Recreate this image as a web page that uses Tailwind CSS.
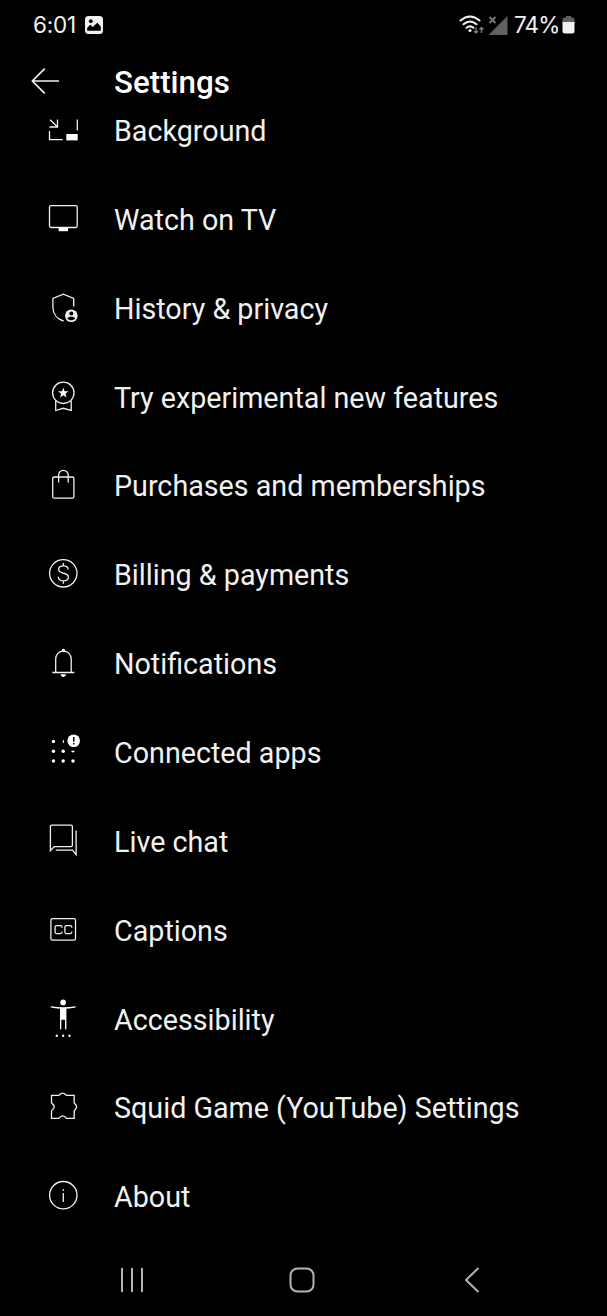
<!DOCTYPE html>
<html lang="en">
<head>
<meta charset="utf-8">
<meta name="viewport" content="width=device-width">
<title>Settings</title>
<script src="https://cdn.jsdelivr.net/npm/@tailwindcss/browser@4"></script>
</head>
<body class="bg-black">
<div class="w-[607px] h-[1316px] bg-black text-[#f1f1f1] font-['Roboto',sans-serif] flex flex-col overflow-hidden">
  <!-- Status bar -->
  <header class="h-[49px] shrink-0 flex items-center justify-between pl-[33px] pr-[32px] text-[23px] leading-none">
    <div class="flex items-center gap-[8px]">
      <span class="w-[44px] whitespace-nowrap font-['Inter',sans-serif] text-[22.5px] tracking-[-0.2px] pt-px">6:01</span>
      <svg class="w-[18px] h-[18px]" viewBox="0 0 18 18"><rect width="18" height="18" rx="3.5" fill="#f1f1f1"/><circle cx="5.8" cy="5.2" r="1.9" fill="#000"/><path d="M2.2 14.8v-3l3-3 2.6 2.3 4.4-4.3 3.6 3.6v4.4z" fill="#000"/></svg>
    </div>
    <div class="flex items-center">
      <svg class="w-[50px] h-[22px]" viewBox="459 13 50 22" fill="none"><g stroke="#f1f1f1" stroke-width="2" stroke-linecap="round"><path d="M460.500 19.500q9.500-8 19 0M463.500 23.300q6.500-5.600 13 0M466.500 26.800q3.500-2.800 7 0"/></g><circle cx="470" cy="29.500" r="1.500" fill="#f1f1f1"/><path d="M476 26.500v5.500m-2-2 2 2 2-2M481.500 32v-5.500m-2 2 2-2 2 2" stroke="#777" stroke-width="1.500"/><path d="M507.500 15v19H488.500z" fill="#606060"/><path d="m489.500 16 6 6m0-6-6 6" stroke="#777" stroke-width="2"/></svg>
      <span class="ml-[5px] w-[45px] whitespace-nowrap font-['Inter',sans-serif] text-[22.5px] tracking-[-0.9px] pt-px">74%</span>
      <svg class="ml-[3px] w-[13px] h-[18px]" viewBox="0 0 13 18"><path d="M4 0h5v1.500h1.500a2 2 0 0 1 2 2V7H.500V3.500a2 2 0 0 1 2-2H4z" fill="#606060"/><path d="M.500 6h12v9a2.500 2.500 0 0 1-2.500 2.500H3A2.500 2.500 0 0 1 .500 15z" fill="#f1f1f1"/></svg>
    </div>
  </header>
  <!-- Toolbar -->
  <div class="h-[66px] shrink-0 flex items-center pl-[31px]">
    <svg class="w-[29px] h-[28px] mb-[2px]" viewBox="0 0 29 28" fill="none" stroke="#f1f1f1" stroke-width="1.700"><path d="M28 14H1.500M13.700 1.700 1.400 14l12.300 12.300"/></svg>
    <h1 class="ml-[54px] pt-px text-[31.300px] leading-[36px] font-medium text-white">Settings</h1>
  </div>
  <!-- Preference list, scrolled so that the first row sits under the toolbar -->
  <main class="h-[1127px] shrink-0 overflow-hidden">
    <ul class="-mt-[28.400px] text-[28.700px] [&>li]:h-[88.870px] [&>li]:flex [&>li]:items-center [&>li]:pl-[40px] [&>li]:gap-[14px] [&_svg]:w-[60px] [&_svg]:h-[60px] [&_svg]:shrink-0 [&_span]:whitespace-nowrap [&_span]:pt-px">
      <li><svg viewBox="0 0 60 60" fill="none" stroke="#f1f1f1" stroke-width="1.300"><path d="m10 18.700 7.300 7M17.500 18.500V26H9.500M9.500 30v8.700h13.200M37.300 18.400v11"/><path d="M26.300 33h11.400v6.400H26.300z" fill="#fff" stroke="none"/></svg><span>Background</span></li>
      <li><svg viewBox="0 0 60 60" fill="none" stroke="#f1f1f1" stroke-width="1.300"><rect x="9.500" y="15.700" width="27.700" height="21.800" rx="1.500"/><path d="M18.700 37.500H28v3.700h-9.300z" fill="#fff" stroke="none"/></svg><span>Watch on TV</span></li>
      <li><svg viewBox="0 0 60 60" fill="none" stroke="#f1f1f1" stroke-width="1.300"><path d="M33.700 27.400v-8L23.300 15.200l-10.400 4.200v8.800c0 6.500 4.300 11.800 10.800 14"/><circle cx="31.300" cy="36.700" r="6.300" fill="#f1f1f1" stroke="none"/><circle cx="31.300" cy="34.500" r="2" fill="#000" stroke="none"/><path d="M27.400 39.200c.7-2 7.100-2 7.800 0-1.600 2.700-6.200 2.700-7.800 0" fill="#000" stroke="none"/></svg><span>History &amp; privacy</span></li>
      <li><svg viewBox="0 0 60 60" fill="none" stroke="#f1f1f1" stroke-width="1.300"><circle cx="23.300" cy="24.800" r="10.700"/><path d="M15.700 32.500v10l7.600-2.200 7.900 2.200v-10"/><path d="m23.300 19.500 1.300 3.700 4 .1-3.200 2.400 1.200 3.900-3.300-2.300-3.300 2.300 1.200-3.900-3.200-2.400 4-.1z" fill="#fff" stroke="none"/></svg><span>Try experimental new features</span></li>
      <li><svg viewBox="0 0 60 60" fill="none" stroke="#f1f1f1" stroke-width="1.300"><rect x="12.700" y="21" width="21.200" height="21.200" rx="1.500"/><path d="M18.600 26.400v-7.200a4.800 4.800 0 0 1 9.600 0v7.200"/></svg><span>Purchases and memberships</span></li>
      <li><svg viewBox="0 0 60 60" fill="none" stroke="#f1f1f1" stroke-width="1.300"><circle cx="23.300" cy="28.300" r="13.700"/><path d="M23.300 18v3M23.300 35.700v3M28.200 24.500c-.2-2.200-2.200-3.600-4.800-3.600-2.800 0-4.800 1.500-4.800 3.600 0 5.100 9.800 2.400 9.800 7.500 0 2.300-2.200 3.800-5 3.800-3 0-5-1.500-5.200-4"/></svg><span>Billing &amp; payments</span></li>
      <li><svg viewBox="0 0 60 60" fill="none" stroke="#f1f1f1" stroke-width="1.300"><path d="M12.300 38.500h22M15.700 38.500V25c0-4.500 3.300-7.800 7.700-7.800s7.800 3.300 7.800 7.800v13.500"/><path d="M21.700 17.500v-1a1.700 1.700 0 0 1 3.400 0v1zM20.700 40.300h5.200c-.3 3.600-4.900 3.600-5.200 0" fill="#fff" stroke="none"/></svg><span>Notifications</span></li>
      <li><svg viewBox="0 0 60 60" fill="#fff"><circle cx="13.400" cy="18.500" r="1.700"/><path d="M24 16.800a1.800 1.800 0 0 0 0 3.400z"/><circle cx="13.400" cy="28.200" r="1.700"/><circle cx="23.200" cy="28.200" r="1.700"/><path d="M31.200 27.800h3.600a1.800 1.800 0 0 1-3.600 0"/><circle cx="13.400" cy="38" r="1.700"/><circle cx="23.200" cy="38" r="1.700"/><circle cx="33" cy="38" r="1.700"/><circle cx="33.700" cy="17.700" r="6.300"/><path d="M33 14h1.500v4.800H33zM33 19.900h1.500v1.500H33z" fill="#000"/></svg><span>Connected apps</span></li>
      <li><svg viewBox="0 0 60 60" fill="none" stroke="#f1f1f1" stroke-width="1.300"><path d="M10.400 38.700V14.600q0-1.400 1.400-1.400H31q1.400 0 1.400 1.400v18.700q0 1.400-1.400 1.400H14.200zM36.100 18.400v24.300l-3.600-4.500H15.700"/></svg><span>Live chat</span></li>
      <li><svg viewBox="0 0 60 60" fill="none" stroke="#f1f1f1" stroke-width="1.300"><rect x="10.900" y="17.600" width="24.600" height="21.600" rx="1.700"/><path d="M22 26.800v-.7q0-1.500-1.500-1.500h-3.900q-1.500 0-1.500 1.500v5q0 1.500 1.500 1.500h3.900q1.500 0 1.500-1.500v-.7M31.800 26.800v-.7q0-1.500-1.500-1.500h-3.900q-1.500 0-1.500 1.500v5q0 1.500 1.500 1.500h3.900q1.500 0 1.500-1.500v-.7"/></svg><span>Captions</span></li>
      <li><svg viewBox="0 0 60 60" fill="#fff"><circle cx="23.100" cy="12.400" r="2.800"/><path d="M10.700 16.200q12.400 2.200 25 0v1.400q-4.500.8-9.300 1.200V39.200h-1.400v-9.500h-3.700v9.500H20V18.800q-4.800-.4-9.300-1.200z"/><circle cx="16.800" cy="45.700" r="1.200"/><circle cx="23.100" cy="45.700" r="1.200"/><circle cx="29.500" cy="45.700" r="1.200"/></svg><span>Accessibility</span></li>
      <li><svg viewBox="0 0 60 60" fill="none" stroke="#f1f1f1" stroke-width="1.300"><path d="M11.500 17.300h7.200c1.200 0 1.400-2.200 4-2.200s2.800 2.200 4 2.200h7.500v7.400c0 1.200 2.400 1.400 2.400 4.100s-2.400 2.900-2.400 4.100v7.500h-7.500c-1.200 0-1.400-2.600-4-2.600s-2.800 2.600-4 2.600h-7.200v-7.500c0-1.200 2.700-1.400 2.700-4.100s-2.700-2.900-2.700-4.100z"/></svg><span>Squid Game (YouTube) Settings</span></li>
      <li><svg viewBox="0 0 60 60" fill="none" stroke="#f1f1f1" stroke-width="1.300"><circle cx="23.300" cy="28.200" r="13.700"/><path d="M23.300 26v9M23.300 22.300v1.800"/></svg><span>About</span></li>
    </ul>
  </main>
  <!-- System navigation -->
  <nav class="grow flex items-center pl-[120px] pt-px">
    <svg class="w-[24px] h-[26px]" viewBox="0 0 24 26" stroke="#b4b4b4" stroke-width="2"><path d="M2 1v24M12 1v24M22 1v24"/></svg>
    <svg class="ml-[145px] w-[26px] h-[26px]" viewBox="0 0 26 26" fill="none" stroke="#b4b4b4" stroke-width="2"><rect x="1.500" y="1.500" width="23" height="23" rx="7"/></svg>
    <svg class="ml-[149px] w-[16px] h-[26px]" viewBox="0 0 16 26" fill="none" stroke="#b4b4b4" stroke-width="2"><path d="M14.500 1 2 13l12.500 12"/></svg>
  </nav>
</div>
</body>
</html>
